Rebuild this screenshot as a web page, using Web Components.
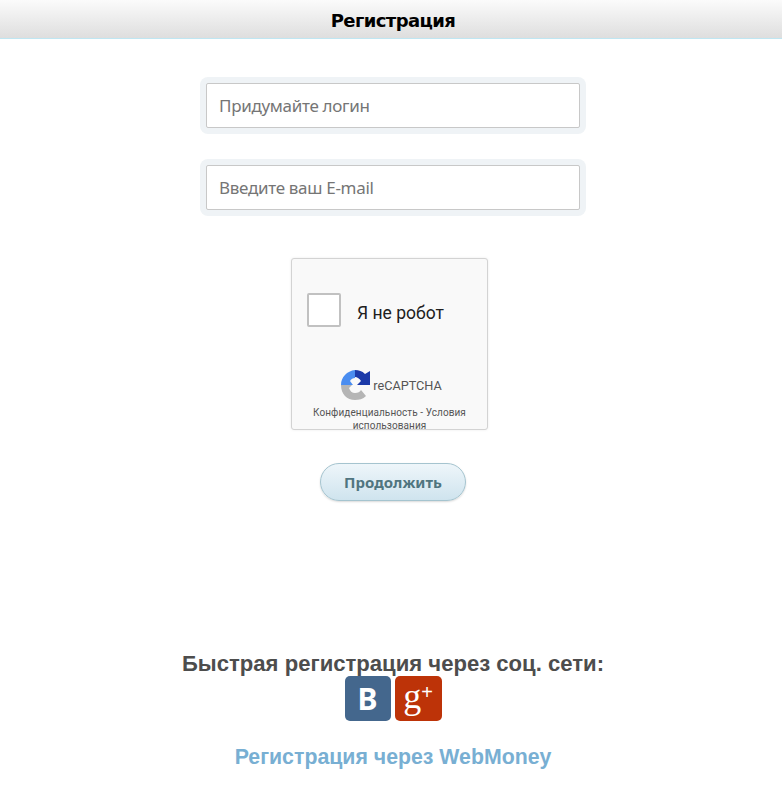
<!DOCTYPE html>
<html lang="ru">
<head>
<meta charset="utf-8">
<title>Регистрация</title>
<style>
  html, body { margin: 0; padding: 0; background: #fff; }
  body { font-family: "Liberation Sans", Arial, sans-serif; }
</style>
</head>
<body>
<page-header>Регистрация</page-header>
<reg-form>
  <text-field placeholder="Придумайте логин"></text-field>
  <text-field placeholder="Введите ваш E-mail"></text-field>
  <captcha-box></captcha-box>
  <pill-button>Продолжить</pill-button>
</reg-form>
<social-block>
  <span slot="title">Быстрая регистрация через соц. сети:</span>
  <a slot="link" href="#">Регистрация через WebMoney</a>
</social-block>

<script>
class PageHeader extends HTMLElement {
  constructor() {
    super();
    this.attachShadow({ mode: 'open' }).innerHTML = `
      <style>
        :host {
          display: block;
          height: 38px;
          padding-left: 4px;
          text-align: center;
          font: bold 18px/41px "DejaVu Sans", sans-serif;
          color: #000;
          background: linear-gradient(#fbfbfb, #dedede);
          border-bottom: 1px solid #bfe6f2;
        }
        span { letter-spacing: -0.6px; }
      </style>
      <span><slot></slot></span>`;
  }
}

class RegForm extends HTMLElement {
  constructor() {
    super();
    this.attachShadow({ mode: 'open' }).innerHTML = `
      <style>
        :host {
          display: flex;
          flex-direction: column;
          align-items: center;
          padding: 38px 0 0 4px;
        }
      </style>
      <slot></slot>`;
  }
}

class TextField extends HTMLElement {
  constructor() {
    super();
    this.attachShadow({ mode: 'open' }).innerHTML = `
      <style>
        :host {
          display: block;
          box-sizing: border-box;
          width: 386px;
          height: 57px;
          padding: 6px;
          margin-bottom: 25px;
          background: #eff3f6;
          border-radius: 8px;
        }
        input {
          display: block;
          box-sizing: border-box;
          width: 100%;
          height: 45px;
          padding: 0 12px;
          border: 1px solid #c8c8c8;
          border-radius: 2px;
          background: #fff;
          outline: none;
          font: 17px "Noto Sans", sans-serif;
          letter-spacing: -0.3px;
        }
        input::placeholder { color: #757575; opacity: 1; }
      </style>
      <input type="text">`;
    this.shadowRoot.querySelector('input').placeholder = this.getAttribute('placeholder') || '';
  }
}

class CaptchaBox extends HTMLElement {
  constructor() {
    super();
    this.attachShadow({ mode: 'open' }).innerHTML = `
      <style>
        :host {
          display: block;
          box-sizing: border-box;
          width: 197px;
          height: 172px;
          margin: 17px 7px 0 0;
          background: #f9f9f9;
          border: 1px solid #d3d3d3;
          border-radius: 3px;
          box-shadow: 0 0 3px rgba(0,0,0,.08);
          font-family: Roboto, sans-serif;
        }
        .row {
          display: flex;
          align-items: center;
          gap: 16px;
          height: 34px;
          padding: 34px 0 0 15px;
        }
        .check {
          box-sizing: border-box;
          width: 34px;
          height: 34px;
          background: #fff;
          border: 2px solid #c1c1c1;
          border-radius: 2px;
        }
        .label { font-size: 17.5px; line-height: 24px; margin-top: 6px; color: #202020; }
        .logo {
          display: flex;
          align-items: center;
          justify-content: center;
          gap: 3px;
          margin-top: 43px;
          padding-left: 4px;
          font-size: 12.7px;
          color: #555;
        }
        svg { display: block; }
        .terms {
          margin-top: 6px;
          padding: 0 8px;
          text-align: center;
          font-size: 10px;
          letter-spacing: .08px;
          line-height: 13px;
          color: #555;
        }
      </style>
      <div class="row">
        <div class="check"></div>
        <div class="label">Я не робот</div>
      </div>
      <div class="logo">
        <svg width="29" height="30" viewBox="0 0 29 30">
          <path fill="#b5b5b5" d="M0 15h11l-3 3c1 3 3 5 6 5 3 0 5-1 6-3l5 6c-3 3-7 4-11 4-8 0-14-6-14-15z"/>
          <path fill="#4a8df0" d="M0 15C0 7 6 1 14 0v8c-2 0-4 1-5 3l3 4z"/>
          <path fill="#1c3aa9" d="M14 0c4 0 7 1 10 4l5-3v14H16l4-4c-1-2-4-4-6-4z"/>
        </svg>
        <span>reCAPTCHA</span>
      </div>
      <div class="terms">Конфиденциальность - Условия использования</div>`;
  }
}

class PillButton extends HTMLElement {
  constructor() {
    super();
    this.attachShadow({ mode: 'open' }).innerHTML = `
      <style>
        :host {
          display: block;
          margin-top: 33px;
        }
        button {
          display: block;
          box-sizing: border-box;
          width: 146px;
          height: 38px;
          padding: 0;
          border: 1px solid #a5c4cf;
          border-radius: 19px;
          background: linear-gradient(#eef6fa, #cfe4ee);
          box-shadow: 0 1px 2px rgba(0,0,0,.15);
          color: #50757f;
          font: bold 15px "Noto Sans", sans-serif;
        }
      </style>
      <button type="button"><slot></slot></button>`;
  }
}

class SocialBlock extends HTMLElement {
  constructor() {
    super();
    this.attachShadow({ mode: 'open' }).innerHTML = `
      <style>
        :host {
          display: block;
          padding: 150px 0 0 4px;
          text-align: center;
        }
        .title {
          font: bold 22.1px/25px "Liberation Sans", sans-serif;
          color: #4d4d4d;
        }
        .icons {
          display: flex;
          justify-content: center;
          gap: 4px;
        }
        .icon {
          width: 46px;
          height: 45px;
          border-radius: 5px;
          color: #fff;
          display: flex;
          align-items: center;
          justify-content: center;
        }
        .vk { background: #44678d; font: bold 30px/41px "Noto Sans", sans-serif; }
        .gp { width: 47px; background: #bd3308; font: 36px/41px "Liberation Serif", serif; padding-bottom: 4px; box-sizing: border-box; }
        .gp sup { font: 20px/0 "Liberation Sans", sans-serif; margin-top: -10px; }
        .link {
          margin-top: 23px;
          font: bold 21.3px/26px "Liberation Sans", sans-serif;
        }
        ::slotted(a) { color: #78afd3; text-decoration: none; }
      </style>
      <div class="title"><slot name="title"></slot></div>
      <div class="icons">
        <div class="icon vk">В</div>
        <div class="icon gp">g<sup>+</sup></div>
      </div>
      <div class="link"><slot name="link"></slot></div>`;
  }
}

customElements.define('page-header', PageHeader);
customElements.define('reg-form', RegForm);
customElements.define('text-field', TextField);
customElements.define('captcha-box', CaptchaBox);
customElements.define('pill-button', PillButton);
customElements.define('social-block', SocialBlock);
</script>
</body>
</html>
